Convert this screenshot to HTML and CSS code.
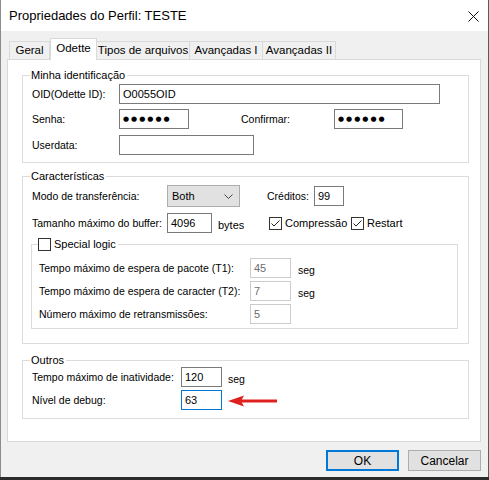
FILE: index.html
```html
<!DOCTYPE html>
<html lang="pt">
<head>
    <meta charset="UTF-8">
    <meta name="viewport" content="width=device-width, initial-scale=1.0">
    <title>Propriedades do Perfil: TESTE</title>
    <link rel="stylesheet" href="styles.css">
</head>
<body>
    <div class="window">
        <div class="titlebar">
            <span class="title">Propriedades do Perfil: TESTE</span>
            <svg class="close" width="11" height="11" viewBox="0 0 11 11">
                <path d="M0.5 0.5L10.5 10.5M10.5 0.5L0.5 10.5" stroke="#111" stroke-width="1" fill="none"/>
            </svg>
        </div>

        <div class="dialog">
            <div class="tabs">
                <div class="tab w-geral">Geral</div>
                <div class="tab active w-odette">Odette</div>
                <div class="tab w-tipos">Tipos de arquivos</div>
                <div class="tab w-av1">Avançadas I</div>
                <div class="tab w-av2">Avançadas II</div>
            </div>

            <div class="panel">
                <!-- identificação -->
                <fieldset class="group group-id">
                    <legend>Minha identificação</legend>
                    <div class="row">
                        <span class="lbl lbl-id">OID(Odette ID):</span>
                        <span class="field w-oid">O0055OID</span>
                    </div>
                    <div class="row gap5">
                        <span class="lbl lbl-id">Senha:</span>
                        <span class="field w-pass"><span class="dots">●●●●●●</span></span>
                        <span class="lbl lbl-confirm">Confirmar:</span>
                        <span class="field w-pass2"><span class="dots">●●●●●●</span></span>
                    </div>
                    <div class="row gap6">
                        <span class="lbl lbl-id">Userdata:</span>
                        <span class="field w-user"></span>
                    </div>
                </fieldset>

                <!-- características -->
                <fieldset class="group group-car">
                    <legend>Características</legend>
                    <div class="row row-select">
                        <span class="lbl lbl-car">Modo de transferência:</span>
                        <span class="select">
                            <span>Both</span>
                            <svg width="9" height="5" viewBox="0 0 9 5"><path d="M0.5 0.5L4.5 4.5L8.5 0.5" stroke="#444" fill="none"/></svg>
                        </span>
                        <span class="lbl lbl-cred">Créditos:</span>
                        <span class="field w-cred">99</span>
                    </div>
                    <div class="row gap6">
                        <span class="lbl lbl-car">Tamanho máximo do buffer:</span>
                        <span class="field w-buf">4096</span>
                        <span class="unit-bytes">bytes</span>
                        <span class="cb checked"><svg width="11" height="11" viewBox="0 0 11 11"><path d="M1.5 5.5L4 8L9.5 2.5" stroke="#222" fill="none"/></svg></span>
                        <span class="cb-label w-comp">Compressão</span>
                        <span class="cb checked"><svg width="11" height="11" viewBox="0 0 11 11"><path d="M1.5 5.5L4 8L9.5 2.5" stroke="#222" fill="none"/></svg></span>
                        <span class="cb-label">Restart</span>
                    </div>

                    <fieldset class="group sub">
                        <legend><span class="cb"></span><span class="cb-label">Special logic</span></legend>
                        <div class="row">
                            <span class="lbl lbl-sub">Tempo máximo de espera de pacote (T1):</span>
                            <span class="field disabled w-sub">45</span>
                            <span class="unit">seg</span>
                        </div>
                        <div class="row gap3">
                            <span class="lbl lbl-sub">Tempo máximo de espera de caracter (T2):</span>
                            <span class="field disabled w-sub">7</span>
                            <span class="unit">seg</span>
                        </div>
                        <div class="row gap3">
                            <span class="lbl lbl-sub">Número máximo de retransmissões:</span>
                            <span class="field disabled w-sub">5</span>
                        </div>
                    </fieldset>
                </fieldset>

                <!-- outros -->
                <fieldset class="group group-out">
                    <legend>Outros</legend>
                    <div class="row">
                        <span class="lbl lbl-out">Tempo máximo de inatividade:</span>
                        <span class="field w-out">120</span>
                        <span class="unit unit-out">seg</span>
                    </div>
                    <div class="row gap3">
                        <span class="lbl lbl-out">Nível de debug:</span>
                        <span class="field focus w-out">63</span>
                        <svg class="arrow" width="50" height="14" viewBox="0 0 50 14">
                            <path d="M13 7H49" stroke="#e0201e" stroke-width="3"/>
                            <path d="M0 7L16 1.5L13 7L16 12.5Z" fill="#e0201e"/>
                        </svg>
                    </div>
                </fieldset>
            </div>

            <div class="buttons">
                <button class="btn default">OK</button>
                <button class="btn">Cancelar</button>
            </div>
        </div>
    </div>
</body>
</html>
```

FILE: styles.css
```css
* {
    box-sizing: border-box;
}
body {
    margin: 0;
    background-color: #2b2b2b;
    font-family: "Liberation Sans", Arial, sans-serif;
    font-size: 10.5px;
    color: #000;
}
.window {
    width: 489px;
    height: 477px;
    background-color: #f0f0f0;
    border-left: 1px solid #8c8c8c;
    border-right: 1px solid #5a5a5a;
}
.titlebar {
    height: 31px;
    background-color: #fff;
    display: flex;
    align-items: center;
    justify-content: space-between;
    padding: 0 9px 0 8px;
    font-size: 13px;
}
.close {
    margin-top: 1px;
}
.dialog {
    padding: 7px 7px 0 6px;
}

/* tabs */
.tabs {
    display: flex;
    align-items: flex-start;
    height: 21px;
    padding-left: 2px;
    position: relative;
    z-index: 1;
}
.tab {
    height: 18px;
    margin-top: 3px;
    border: 1px solid #d9d9d9;
    border-bottom: none;
    background-color: #f0f0f0;
    text-align: center;
    line-height: 17px;
    font-size: 11.5px;
}
.tab + .tab {
    border-left: none;
}
.tab.active {
    height: 22px;
    margin-top: 0;
    background-color: #fff;
    line-height: 19px;
    border-left: 1px solid #d9d9d9;
}
.tab.active + .tab {
    border-left: none;
}
.w-geral { width: 41px; }
.w-odette { width: 47px; }
.w-tipos { width: 93px; }
.w-av1 { width: 73px; }
.w-av2 { width: 73px; }

.panel {
    height: 383px;
    background-color: #fff;
    border: 1px solid #d9d9d9;
    padding: 8px 11px 0 14px;
}

/* group boxes */
.group {
    margin: 0;
    border: 1px solid #dcdcdc;
    padding: 2px 10px 7px 9px;
    min-width: 0;
}
.group legend {
    padding: 0 2px 0 1px;
    margin-left: -2px;
    line-height: 14px;
    height: 14px;
    font-size: 11px;
}
.group-car {
    margin-top: 6px;
    padding-bottom: 14px;
}
.group-out {
    margin-top: 9px;
    padding-top: 0;
    padding-bottom: 8px;
}
.sub {
    margin: 4px 0 0 -1px;
    padding: 7px 8px 4px 7px;
}
.sub legend {
    display: flex;
    align-items: center;
    margin-left: -1px;
    padding: 0 2px 0 0;
}

.row {
    display: flex;
    align-items: center;
    height: 20px;
}
.row-select {
    height: 22px;
}
.gap3 { margin-top: 3px; }
.gap5 { margin-top: 5px; }
.gap6 { margin-top: 6px; }

.lbl {
    flex: 0 0 auto;
    white-space: nowrap;
}
.lbl-id { width: 87px; }
.lbl-confirm { width: 93px; margin-left: 52px; }
.lbl-car { width: 135px; }
.lbl-cred { width: 47px; margin-left: 27px; }
.lbl-sub { width: 211px; }
.lbl-out { width: 149px; }

.field {
    flex: 0 0 auto;
    height: 20px;
    border: 1px solid #7a7a7a;
    background-color: #fff;
    padding-left: 3px;
    line-height: 18px;
    font-size: 11px;
    white-space: nowrap;
}
.field.disabled {
    border-color: #cccccc;
    color: #6d6d6d;
}
.field.focus {
    border-color: #0078d7;
}
.dots {
    font-family: "DejaVu Sans", sans-serif;
    font-size: 7px;
    letter-spacing: 2px;
    vertical-align: top;
}
.w-oid { width: 321px; }
.w-pass { width: 70px; }
.w-pass2 { width: 69px; }
.w-user { width: 135px; }
.w-cred { width: 30px; }
.w-buf { width: 45px; }
.w-sub { width: 41px; }
.w-out { width: 41px; }

.select {
    flex: 0 0 auto;
    width: 73px;
    height: 22px;
    display: flex;
    align-items: center;
    justify-content: space-between;
    padding: 0 6px 0 4px;
    background-color: #e1e1e1;
    border: 1px solid #adadad;
    font-size: 11px;
}

.unit {
    margin-left: 7px;
    margin-top: 3px;
}
.unit-out {
    margin-left: 6px;
}
.unit-bytes {
    width: 51px;
    margin-left: 6px;
    margin-top: 3px;
    font-size: 11px;
}

.cb {
    flex: 0 0 auto;
    width: 13px;
    height: 13px;
    border: 1px solid #333;
    background-color: #fff;
    display: inline-flex;
    align-items: center;
    justify-content: center;
}
.cb-label {
    margin-left: 3px;
    font-size: 11px;
}
.w-comp {
    width: 66px;
}

.arrow {
    margin-left: 6px;
    margin-top: 1px;
}

/* dialog buttons */
.buttons {
    display: flex;
    justify-content: flex-end;
    gap: 9px;
    margin-top: 8px;
}
.btn {
    width: 73px;
    height: 21px;
    padding: 0;
    background-color: #e1e1e1;
    border: 1px solid #adadad;
    font-family: "Liberation Sans", Arial, sans-serif;
    font-size: 12px;
    color: #000;
}
.btn.default {
    border: 2px solid #0078d7;
}
```
